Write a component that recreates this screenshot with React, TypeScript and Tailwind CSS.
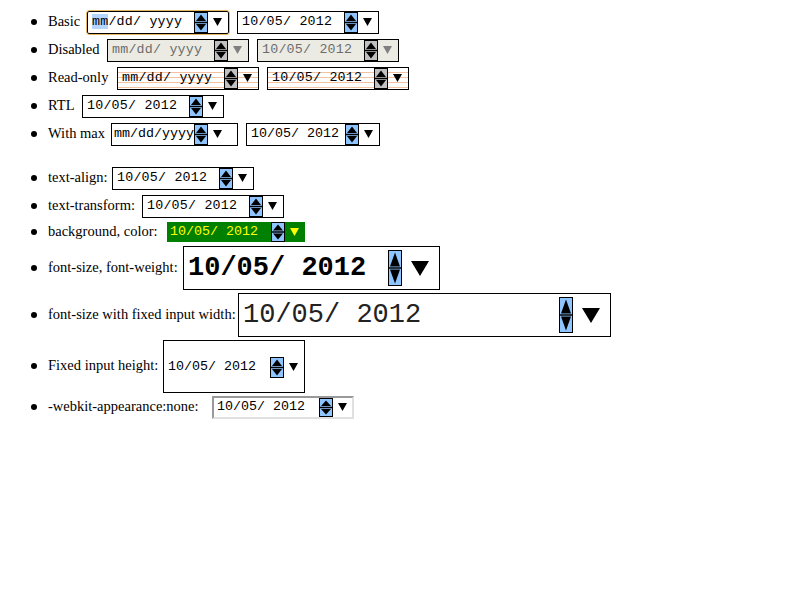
import React from 'react';

const BLUE = '#8ec5ff';

function Spin({ h = 21, bg = BLUE }: { h?: number; bg?: string }) {
  const m = h / 2;
  return (
    <svg width="14" height={h} className="shrink-0">
      <rect x="0.5" y="0.5" width="13" height={h - 1} fill={bg} stroke="#000" />
      <line x1="0" y1={m} x2="14" y2={m} stroke="#000" strokeWidth="1.5" />
      <polygon points={`7,2.5 12,${m - 1.5} 2,${m - 1.5}`} fill="#000" />
      <polygon points={`2,${m + 1.5} 12,${m + 1.5} 7,${h - 2.5}`} fill="#000" />
    </svg>
  );
}

function Arrow({ w = 9, color = '#000' }: { w?: number; color?: string }) {
  const h = Math.round(w * 0.85);
  return (
    <svg width={w} height={h} className="shrink-0">
      <polygon points={`0,0 ${w},0 ${w / 2},${h}`} fill={color} />
    </svg>
  );
}

// plain date box, 142px wide, mono text
function DateBox({
  text,
  className = '',
  spinBg = BLUE,
  arrow = '#000',
  hl = false,
}: {
  text: string;
  className?: string;
  spinBg?: string;
  arrow?: string;
  hl?: boolean;
}) {
  return (
    <div
      className={`flex items-center w-[142px] h-[23px] border border-black pl-[4px] pr-[6px] font-['Liberation_Mono',monospace] text-[13.33px] tracking-[0.2px] whitespace-pre ${className}`}
    >
      {hl ? (
        <span>
          <span className="bg-[#b4d5fe]">mm</span>
          {text.slice(2)}
        </span>
      ) : (
        <span>{text}</span>
      )}
      <span className="flex-1" />
      <Spin bg={spinBg} />
      <span className="w-[5px]" />
      <Arrow color={arrow} />
    </div>
  );
}

// label column width is set per row so the boxes line up with the screenshot
function Row({
  label,
  lw,
  children,
  className = '',
}: {
  label: string;
  lw: string;
  children: React.ReactNode;
  className?: string;
}) {
  return (
    <li className={`flex items-center ${className}`}>
      <span className="w-[6px] h-[6px] rounded-full bg-black mr-[11px]" />
      <span className={`shrink-0 whitespace-nowrap ${lw}`}>{label}</span>
      {children}
    </li>
  );
}

const stripes =
  'bg-[repeating-linear-gradient(to_bottom,#fff_0px,#fff_4px,#f2c2a0_4px,#f2c2a0_5px)]';

export default function App() {
  return (
    <div className="w-[800px] h-[600px] bg-white text-black font-['Liberation_Serif',serif] text-[14.5px]">
      <ul className="pt-[8px] pl-[31px] flex flex-col">
        <Row label="Basic" lw="w-[39px]" className="h-[28px]">
          <DateBox text="mm/dd/ yyyy" hl className="border-[#c8881c] rounded-[2px] outline outline-1 outline-[#e8b860]" />
          <DateBox text="10/05/ 2012" className="ml-[8px]" />
        </Row>
        <Row label="Disabled" lw="w-[59px]" className="h-[28px]">
          <DateBox text="mm/dd/ yyyy" className="bg-[#ebebe4] border-[#999] text-[#6d6d6d]" spinBg="#c0c0c0" arrow="#808080" />
          <DateBox text="10/05/ 2012" className="ml-[8px] bg-[#ebebe4] border-[#999] text-[#6d6d6d]" spinBg="#c0c0c0" arrow="#808080" />
        </Row>
        <Row label="Read-only" lw="w-[69px]" className="h-[28px]">
          <DateBox text="mm/dd/ yyyy" className={stripes} spinBg="#c0c0c0" />
          <DateBox text="10/05/ 2012" className={`ml-[8px] ${stripes}`} spinBg="#c0c0c0" />
        </Row>
        <Row label="RTL" lw="w-[34px]" className="h-[28px]">
          <DateBox text="10/05/ 2012" />
        </Row>
        <Row label="With max" lw="w-[63px]" className="h-[28px]">
          <div className="flex items-center w-[127px] h-[23px] border border-black pl-[2px] pr-[6px] font-['Liberation_Mono',monospace] text-[13.33px] whitespace-pre">
            <span>mm/dd/yyyy</span>
            <Spin />
            <span className="w-[5px]" />
            <Arrow />
          </div>
          <div className="flex items-center w-[134px] h-[23px] ml-[8px] border border-black pl-[4px] pr-[6px] font-['Liberation_Mono',monospace] text-[13.33px] whitespace-pre">
            <span>10/05/ 2012</span>
            <span className="flex-1" />
            <Spin />
            <span className="w-[5px]" />
            <Arrow />
          </div>
        </Row>

        <Row label="text-align:" lw="w-[64px]" className="h-[28px] mt-[16px]">
          <DateBox text="10/05/ 2012" />
        </Row>
        <Row label="text-transform:" lw="w-[94px]" className="h-[28px]">
          <DateBox text="10/05/ 2012" />
        </Row>
        <Row label="background, color:" lw="w-[119px]" className="h-[24px]">
          <div className="flex items-center w-[138px] h-[20px] bg-[#008000] text-[#ffff00] pl-[3px] pr-[6px] font-['Liberation_Mono',monospace] text-[13.33px] whitespace-pre">
            <span>10/05/ 2012</span>
            <span className="flex-1" />
            <Spin h={20} />
            <span className="w-[5px]" />
            <Arrow color="#ffff00" />
          </div>
        </Row>
        <Row label="font-size, font-weight:" lw="w-[135px]" className="h-[48px]">
          <div className="flex items-center w-[257px] h-[44px] border border-black pl-[4px] pr-[10px] font-['Liberation_Mono',monospace] text-[27px] font-bold whitespace-pre">
            <span>10/05/ 2012</span>
            <span className="flex-1" />
            <Spin h={36} />
            <span className="w-[9px]" />
            <Arrow w={18} />
          </div>
        </Row>
        <Row label="font-size with fixed input width:" lw="w-[190px]" className="h-[46px]">
          <div className="flex items-center w-[373px] h-[44px] border border-black pl-[4px] pr-[10px] font-['Liberation_Mono',monospace] text-[27px] text-[#222] whitespace-pre">
            <span>10/05/ 2012</span>
            <span className="flex-1" />
            <Spin h={36} />
            <span className="w-[9px]" />
            <Arrow w={18} />
          </div>
        </Row>
        <Row label="Fixed input height:" lw="w-[115px]" className="h-[56px]">
          <div className="flex items-center w-[142px] h-[53px] border border-black pl-[4px] pr-[6px] pt-[2px] font-['Liberation_Mono',monospace] text-[13.33px] whitespace-pre">
            <span>10/05/ 2012</span>
            <span className="flex-1" />
            <Spin />
            <span className="w-[5px]" />
            <Arrow />
          </div>
        </Row>
        <Row label="-webkit-appearance:none:" lw="w-[164px]" className="h-[26px]">
          <div className="flex items-center w-[142px] h-[23px] border-2 border-t-[#999] border-l-[#999] border-r-[#e0e0e0] border-b-[#e0e0e0] pl-[3px] pr-[5px] font-['Liberation_Mono',monospace] text-[13.33px] whitespace-pre">
            <span>10/05/ 2012</span>
            <span className="flex-1" />
            <Spin h={19} />
            <span className="w-[5px]" />
            <Arrow />
          </div>
        </Row>
      </ul>
    </div>
  );
}
